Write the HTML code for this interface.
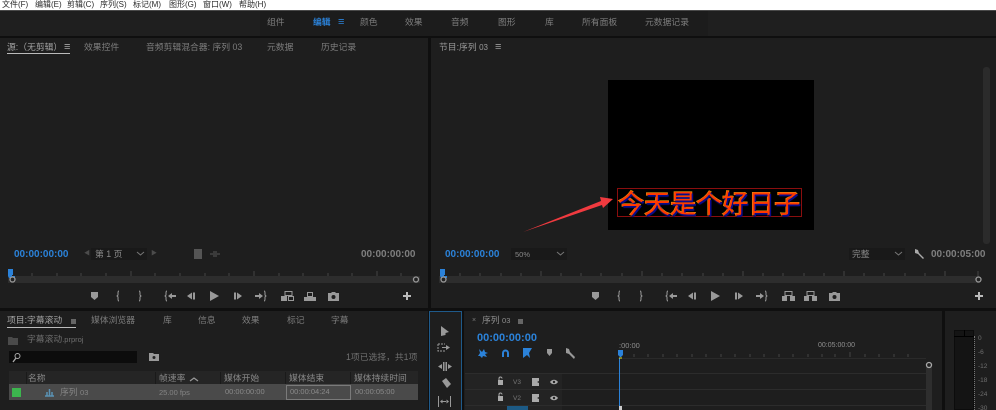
<!DOCTYPE html>
<html><head><meta charset="utf-8">
<style>
*{margin:0;padding:0;box-sizing:border-box}
html,body{width:996px;height:410px;overflow:hidden;background:#0f0f0f}
body{position:relative;font-family:"Liberation Sans","Noto Sans CJK SC",sans-serif}
#w{position:absolute;left:0;top:0;width:996px;height:410px;filter:blur(.35px)}
.a,.t,svg{position:absolute}
.t{white-space:nowrap;font-size:8.8px;line-height:11px;color:#7d7d7d}
.p{position:absolute;background:#1e1e1e}
.tc{font-size:10px;font-weight:bold;color:#7f7f7f}
.m{color:#2a2a2a;font-size:8px;top:-1px;height:10px}
.g{fill:#999}
.v{position:absolute;top:372px;width:1px;height:12px;background:#1a1a1a}
</style></head><body><div id="w">
<div class="a" style="left:0;top:0;width:996px;height:10px;background:#fff"></div>
<div class="t m" style="left:2px">文件(F)</div><div class="t m" style="left:35px">编辑(E)</div><div class="t m" style="left:67px">剪辑(C)</div><div class="t m" style="left:100px">序列(S)</div><div class="t m" style="left:133px">标记(M)</div><div class="t m" style="left:169px">图形(G)</div><div class="t m" style="left:203px">窗口(W)</div><div class="t m" style="left:239px">帮助(H)</div>

<div class="a" style="left:0;top:10px;width:996px;height:26px;background:#1f1f1f;border-top:1px solid #4a4a4a"></div>
<div class="a" style="left:260px;top:11px;width:448px;height:25px;background:#1c1c1c"></div>
<div class="t" style="left:267px;top:17px">组件</div><div class="t" style="left:313px;top:17px;color:#2b82d9;font-weight:bold">编辑</div><div class="t" style="left:338px;top:17px;color:#2b82d9;font-size:11px">≡</div><div class="t" style="left:360px;top:17px">颜色</div><div class="t" style="left:405px;top:17px">效果</div><div class="t" style="left:451px;top:17px">音频</div><div class="t" style="left:498px;top:17px">图形</div><div class="t" style="left:545px;top:17px">库</div><div class="t" style="left:582px;top:17px">所有面板</div><div class="t" style="left:645px;top:17px">元数据记录</div>

<!-- source panel -->
<div class="p" style="left:0;top:38px;width:428px;height:270px"></div>
<div class="t" style="left:7px;top:42px;color:#a5a5a5">源:（无剪辑）</div>
<div class="t" style="left:64px;top:42px;color:#a5a5a5;font-size:11px">≡</div>
<div class="a" style="left:7px;top:53px;width:63px;height:1px;background:#bbb"></div>
<div class="t" style="left:84px;top:42px">效果控件</div><div class="t" style="left:146px;top:42px">音频剪辑混合器: 序列 03</div><div class="t" style="left:267px;top:42px">元数据</div><div class="t" style="left:321px;top:42px">历史记录</div>
<div class="t tc" style="left:14px;top:249px;color:#2b82d9">00:00:00:00</div>
<div class="t" style="left:84px;top:249px;font-size:6px;color:#4c4c4c">◀</div>
<div class="a" style="left:91px;top:248px;width:56px;height:12px;background:#191919"></div>
<div class="t" style="left:95px;top:249px;color:#8a8a8a">第 1 页</div>
<div class="t" style="left:151px;top:249px;font-size:6px;color:#4c4c4c">▶</div>
<svg style="left:136px;top:251px" width="9" height="6"><path d="M1 1l3.500 3L8 1" stroke="#777" fill="none"/></svg>
<div class="a" style="left:194px;top:249px;width:8px;height:10px;background:#555"></div>
<svg style="left:210px;top:250px" width="10" height="8"><path d="M0 4h3M7 4h3M4 1v6M6 1v6" stroke="#555"/></svg>
<div class="t tc" style="left:361px;top:249px">00:00:00:00</div>
<div class="a" style="left:8px;top:276px;width:412px;height:7px;background:#2d2d2d"></div>
<svg style="left:0;top:266px" width="428" height="20">
<path d="M32 7v3M57 7v3M81 7v3M106 7v3M131 5v5M155 7v3M180 7v3M205 7v3M229 7v3M254 5v5M279 7v3M303 7v3M328 7v3M352 7v3M377 5v5M401 7v3" stroke="#444"/>
<path d="M8 3h5v6h-1v1h3v2H9l-1-2z" fill="#2b82d9"/>
<circle cx="12.500" cy="13.500" r="2.500" fill="#222" stroke="#999" stroke-width="1.300"/>
<circle cx="416" cy="13.500" r="2.500" fill="#222" stroke="#999" stroke-width="1.300"/>
</svg>
<svg style="left:88px;top:288px" width="330" height="16">
<g class="g"><path d="M3 4h7v5l-3.500 3L3 9z"/>
<path d="M31 3c-1 0-1 1-1 2v2l-1 1 1 1v2c0 1 0 2 1 2M51 3c1 0 1 1 1 2v2l1 1-1 1v2c0 1 0 2-1 2" fill="none" stroke="#999"/>
<path d="M79 3c-1 0-1 1-1 2v2l-1 1 1 1v2c0 1 0 2 1 2" fill="none" stroke="#999"/><path d="M84 5v6l-4-3zM84 7h4v2h-4z"/>
<path d="M99 8l5-3.500v7zM105 4.500h2v7h-2z"/>
<path d="M122 3l9 5-9 5z"/>
<path d="M146 4.500h2v7h-2zM149 4.500l5 3.500-5 3.500z"/>
<path d="M167 7h4V5l4 3-4 3V9h-4z"/><path d="M176 3c1 0 1 1 1 2v2l1 1-1 1v2c0 1 0 2-1 2" fill="none" stroke="#999"/>
<path d="M193 8h6v5h-6z"/><path d="M197 3.500h7v4h-7zM200.500 8.500h5v4h-5z" fill="none" stroke="#999"/>
<path d="M216 9h12v4h-12z"/><path d="M219.500 4.500h5v4h-5z" fill="none" stroke="#999"/>
<path d="M240 5h3l1-1h3l1 1h3v8h-11z"/>
<path d="M315 7h3V4h2v3h3v2h-3v3h-2V9h-3z" fill="#bbb"/></g>
<circle cx="245.500" cy="9" r="2" fill="#1e1e1e"/>
</svg>

<!-- program panel -->
<div class="p" style="left:431px;top:38px;width:565px;height:270px"></div>
<div class="t" style="left:439px;top:42px;color:#9a9a9a">节目:序列 <span style="font-size:8px">03</span></div>
<div class="t" style="left:495px;top:42px;color:#9a9a9a;font-size:11px">≡</div>
<div class="a" style="left:608px;top:80px;width:206px;height:150px;background:#000"></div>
<div class="a" style="left:983px;top:67px;width:7px;height:177px;background:#2b2b2b;border-radius:3px"></div>
<div class="a" style="left:617px;top:188px;width:185px;height:29px;border:1px solid #8a0e0e"></div>
<div class="t" style="left:618px;top:188px;height:29px;line-height:29px;font-size:26px;color:#ff3a00;font-family:'Noto Sans CJK SC',sans-serif;font-weight:400;-webkit-text-stroke:1.200px #e8900f;paint-order:stroke fill;text-shadow:1.500px 1.500px 0 #0a0a8a,1px 2px 1px #08085a">今天是个好日子</div>
<svg style="left:515px;top:190px" width="105" height="45"><path d="M8 42L86 11 85 7 98 9 88 18 87 15z" fill="#f03a3f"/></svg>
<div class="t tc" style="left:445px;top:249px;color:#2b82d9">00:00:00:00</div>
<div class="a" style="left:511px;top:248px;width:56px;height:12px;background:#191919"></div>
<div class="t" style="left:515px;top:249px;font-size:7.500px;color:#888">50%</div>
<svg style="left:556px;top:251px" width="9" height="6"><path d="M1 1l3.500 3L8 1" stroke="#777" fill="none"/></svg>
<div class="a" style="left:849px;top:248px;width:56px;height:12px;background:#191919"></div>
<div class="t" style="left:852px;top:249px;color:#8a8a8a">完整</div>
<svg style="left:894px;top:251px" width="9" height="6"><path d="M1 1l3.500 3L8 1" stroke="#777" fill="none"/></svg>
<svg style="left:913px;top:248px" width="12" height="12"><path d="M2 1l3 1 1 3 5 5-1 1-5-5-3-1z" fill="#aaa"/></svg>
<div class="t tc" style="left:931px;top:249px">00:00:05:00</div>
<div class="a" style="left:439px;top:276px;width:540px;height:7px;background:#2d2d2d"></div>
<svg style="left:431px;top:266px" width="565" height="20">
<path d="M29 7v3M49 7v3M70 7v3M90 7v3M110 5v5M130 7v3M150 7v3M170 7v3M191 7v3M211 5v5M231 7v3M251 7v3M272 7v3M292 7v3M312 5v5M332 7v3M352 7v3M373 7v3M393 7v3M413 5v5M433 7v3M453 7v3M474 7v3M494 7v3M514 5v5M547 5v5" stroke="#444"/>
<path d="M9 3h5v6h-1v1h3v2h-6l-1-2z" fill="#2b82d9"/>
<circle cx="12.500" cy="13.500" r="2.500" fill="#222" stroke="#999" stroke-width="1.300"/>
<circle cx="547.500" cy="13.500" r="2.500" fill="#222" stroke="#999" stroke-width="1.300"/>
</svg>
<svg style="left:589px;top:288px" width="400" height="16">
<g class="g"><path d="M3 4h7v5l-3.500 3L3 9z"/>
<path d="M31 3c-1 0-1 1-1 2v2l-1 1 1 1v2c0 1 0 2 1 2M51 3c1 0 1 1 1 2v2l1 1-1 1v2c0 1 0 2-1 2" fill="none" stroke="#999"/>
<path d="M79 3c-1 0-1 1-1 2v2l-1 1 1 1v2c0 1 0 2 1 2" fill="none" stroke="#999"/><path d="M84 5v6l-4-3zM84 7h4v2h-4z"/>
<path d="M99 8l5-3.500v7zM105 4.500h2v7h-2z"/>
<path d="M122 3l9 5-9 5z"/>
<path d="M146 4.500h2v7h-2zM149 4.500l5 3.500-5 3.500z"/>
<path d="M167 7h4V5l4 3-4 3V9h-4z"/><path d="M176 3c1 0 1 1 1 2v2l1 1-1 1v2c0 1 0 2-1 2" fill="none" stroke="#999"/>
<path d="M193 8h5v5h-5zM201 8h5v5h-5z"/><path d="M196 3.500h7v4h-7z" fill="none" stroke="#999"/>
<path d="M215 8h5v5h-5zM223 8h5v5h-5z"/><path d="M218 3.500h7v4h-7z" fill="none" stroke="#999"/>
<path d="M240 5h3l1-1h3l1 1h3v8h-11z"/>
<path d="M386 7h3V4h2v3h3v2h-3v3h-2V9h-3z" fill="#bbb"/></g>
<circle cx="245.500" cy="9" r="2" fill="#1e1e1e"/>
</svg>

<!-- project panel -->
<div class="p" style="left:0;top:311px;width:428px;height:99px"></div>
<div class="t" style="left:7px;top:315px;color:#a5a5a5">项目:字幕滚动</div>
<div class="a" style="left:71px;top:319px;width:5px;height:5px;background:#666"></div>
<div class="a" style="left:7px;top:327px;width:69px;height:1px;background:#bbb"></div>
<div class="t" style="left:91px;top:315px">媒体浏览器</div><div class="t" style="left:163px;top:315px">库</div><div class="t" style="left:198px;top:315px">信息</div><div class="t" style="left:242px;top:315px">效果</div><div class="t" style="left:287px;top:315px">标记</div><div class="t" style="left:331px;top:315px">字幕</div>
<svg style="left:8px;top:336px" width="11" height="10"><path d="M0 1h4l1 1h5v7H0z" fill="#4a4a4a"/></svg>
<div class="t" style="left:27px;top:334px;color:#6f6f6f">字幕滚动<span style="font-size:7.500px">.prproj</span></div>
<div class="a" style="left:9px;top:351px;width:128px;height:12px;background:#0c0c0c"></div>
<svg style="left:11px;top:352px" width="11" height="11"><circle cx="6.500" cy="4" r="2.500" fill="none" stroke="#aaa"/><path d="M5 6L2 10" stroke="#aaa" stroke-width="1.300"/></svg>
<svg style="left:149px;top:352px" width="11" height="10"><path d="M0 1h4l1 1h5v7H0z" fill="#999"/><circle cx="5" cy="5.500" r="1.500" fill="#222"/></svg>
<div class="t" style="left:346px;top:352px;color:#6f6f6f">1项已选择，共1项</div>
<div class="a" style="left:9px;top:371px;width:409px;height:13px;background:#252525"></div>
<div class="v" style="left:26px"></div><div class="v" style="left:155px"></div><div class="v" style="left:220px"></div><div class="v" style="left:285px"></div><div class="v" style="left:350px"></div>
<div class="t" style="left:28px;top:373px;color:#8a8a8a">名称</div><div class="t" style="left:159px;top:373px;color:#8a8a8a">帧速率</div>
<svg style="left:189px;top:376px" width="10" height="7"><path d="M1 5l4-3 4 3" stroke="#999" fill="none" stroke-width="1.200"/></svg>
<div class="t" style="left:224px;top:373px;color:#8a8a8a">媒体开始</div><div class="t" style="left:289px;top:373px;color:#8a8a8a">媒体结束</div><div class="t" style="left:354px;top:373px;color:#8a8a8a">媒体持续时间</div>
<div class="a" style="left:9px;top:384px;width:409px;height:16px;background:#4a4a4a"></div>
<div class="a" style="left:12px;top:388px;width:9px;height:9px;background:#3cb54e"></div>
<svg style="left:44px;top:388px" width="11" height="10"><path d="M1 8h9M3 4v4M5.500 1v7M8 4v4" stroke="#5b93b5" stroke-width="1.500"/></svg>
<div class="t" style="left:60px;top:387px;color:#858585">序列 <span style="font-size:7.500px">03</span></div>
<div class="t" style="left:159px;top:387px;font-size:7.500px;color:#858585">25.00 fps</div>
<div class="t" style="left:225px;top:386px;font-size:7.500px;color:#8a8a8a">00:00:00:00</div>
<div class="a" style="left:286px;top:385px;width:65px;height:15px;border:1px solid #7a7a7a"></div>
<div class="t" style="left:290px;top:386px;font-size:7.500px;color:#8a8a8a">00:00:04:24</div>
<div class="t" style="left:355px;top:386px;font-size:7.500px;color:#8a8a8a">00:00:05:00</div>

<!-- tools -->
<div class="a" style="left:429px;top:311px;width:33px;height:99px;background:#1e1e1e;border:1px solid #1f5a8a;border-bottom:0"></div>
<svg style="left:429px;top:311px" width="33" height="99">
<g fill="#999"><path d="M12 15l8 6-3.500 1 0 2-4.500 1z"/>
<path d="M9 33h7M9 33v7h7" stroke="#999" fill="none" stroke-dasharray="2 1"/><path d="M13 36h4v-2l4 2.500-4 2.500v-2h-4z"/>
<path d="M14 51h1.500v9H14zM16.500 51H18v9h-1.500zM9 55.500l4-2.500v5zM23 55.500l-4-2.500v5z"/>
<path d="M13 70l4-3 5 6-4 4z"/>
<path d="M9 85h1v11H9zM21 85h1v11h-1zM11 90.500l2.500-2v4zM20 90.500l-2.500-2v4zM13 90h5v1h-5z"/></g>
</svg>

<!-- timeline -->
<div class="p" style="left:464px;top:311px;width:478px;height:99px"></div>
<div class="t" style="left:472px;top:315px;font-size:7px">×</div>
<div class="t" style="left:482px;top:315px;color:#8f8f8f">序列 <span style="font-size:7.500px">03</span></div>
<div class="a" style="left:518px;top:319px;width:5px;height:5px;background:#666"></div>
<div class="t" style="left:477px;top:333px;font-size:11px;font-weight:bold;color:#2b82d9">00:00:00:00</div>
<svg style="left:476px;top:346px" width="105" height="14">
<g fill="#2b82d9"><path d="M3 3l3 3 2-3 1 3 3 1-3 1 2 3-4-1-1 2-2-2H2l2-3z"/>
<path d="M26 11V7a3.500 3.500 0 017 0v4h-2V7a1.500 1.500 0 00-3 0v4z"/>
<path d="M47 2h9l-3 5 1 5-3-3-4 3z"/></g>
<path d="M71 3h5v4l-2.500 3L71 7z" fill="#999"/>
<path d="M90 2l3 1 1 3 5 5-1 2-5-5-3-1z" fill="#999"/>
</svg>
<div class="t" style="left:619px;top:340px;font-size:7.500px;color:#8f8f8f">:00:00</div>
<div class="t" style="left:818px;top:340px;font-size:7px;color:#8f8f8f">00:05:00:00</div>
<svg style="left:619px;top:350px" width="320" height="10"><path d="M15 4v3M29 4v3M44 4v3M58 4v3M73 4v3M87 4v3M102 4v3M116 4v3M131 4v3M145 4v3M160 4v3M174 4v3M189 4v3M203 4v3M216 4v3M231 2v5M246 4v3M260 4v3M275 4v3M289 4v3" stroke="#444"/></svg>
<div class="a" style="left:618px;top:358px;width:308px;height:1px;background:#2a2a2a"></div>
<div class="a" style="left:465px;top:373px;width:97px;height:37px;background:#232323"></div>
<div class="a" style="left:465px;top:373px;width:461px;height:1px;background:#2c2c2c"></div>
<div class="a" style="left:465px;top:389px;width:461px;height:1px;background:#2c2c2c"></div>
<div class="a" style="left:465px;top:405px;width:461px;height:1px;background:#2c2c2c"></div>
<div class="t" style="left:513px;top:377px;font-size:6.500px;color:#777">V3</div>
<div class="t" style="left:513px;top:393px;font-size:6.500px;color:#777">V2</div>
<svg style="left:495px;top:376px" width="66" height="30">
<g fill="#aaa"><path d="M3 4h5v5H3z"/><path d="M3 20h5v5H3z"/>
<path d="M37 2h7v3l-2 1 2 1v3h-7zM37 18h7v3l-2 1 2 1v3h-7z"/>
<path d="M55 6c2-3 6-3 8 0-2 3-6 3-8 0zM55 22c2-3 6-3 8 0-2 3-6 3-8 0z"/></g>
<path d="M4 4V2.500a1.500 1.500 0 013 0M4 20v-1.500a1.500 1.500 0 013 0" fill="none" stroke="#aaa"/>
<circle cx="59" cy="6" r="1.200" fill="#222"/><circle cx="59" cy="22" r="1.200" fill="#222"/>
</svg>
<div class="a" style="left:507px;top:406px;width:21px;height:4px;background:#1c5a85"></div>
<div class="a" style="left:619px;top:358px;width:1px;height:52px;background:#2b82d9"></div>
<svg style="left:617px;top:349px" width="7" height="11"><path d="M1 1h5v5l-2 2H3L1 6z" fill="#2b82d9"/><path d="M2 9h3" stroke="#dd2"/></svg>
<div class="a" style="left:619px;top:406px;width:3px;height:4px;background:#ccc"></div>
<div class="a" style="left:926px;top:366px;width:6px;height:44px;background:#2e2e2e"></div>
<svg style="left:924px;top:360px" width="10" height="10"><circle cx="5" cy="5" r="2.500" fill="#222" stroke="#aaa" stroke-width="1.300"/></svg>

<!-- meter -->
<div class="p" style="left:945px;top:311px;width:51px;height:99px"></div>
<div class="a" style="left:954px;top:330px;width:20px;height:80px;background:#141414;border:1px solid #0c0c0c"></div>
<div class="a" style="left:954px;top:336px;width:20px;height:1px;background:#000"></div>
<div class="a" style="left:964px;top:330px;width:1px;height:6px;background:#000"></div>
<div class="a" style="left:974px;top:336px;width:1px;height:74px;border-left:1px dotted #777"></div>
<div class="t" style="left:978px;top:333px;font-size:6.500px;color:#6f6f6f">0</div>
<div class="t" style="left:978px;top:347px;font-size:6.500px;color:#6f6f6f">-6</div>
<div class="t" style="left:978px;top:361px;font-size:6.500px;color:#6f6f6f">-12</div>
<div class="t" style="left:978px;top:375px;font-size:6.500px;color:#6f6f6f">-18</div>
<div class="t" style="left:978px;top:389px;font-size:6.500px;color:#6f6f6f">-24</div>
<div class="t" style="left:978px;top:403px;font-size:6.500px;color:#6f6f6f">-30</div>
</div></body></html>
